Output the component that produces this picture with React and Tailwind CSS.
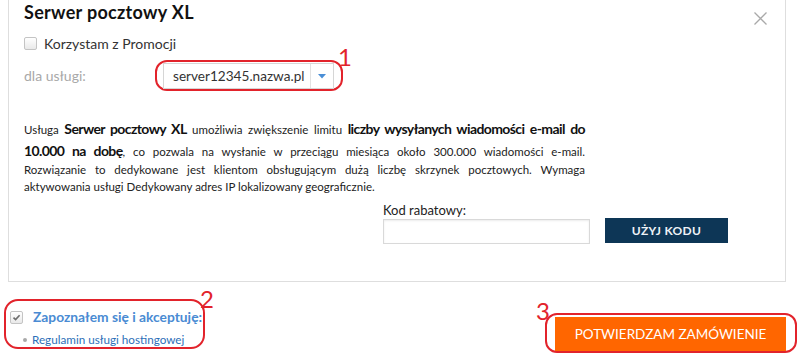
import React from "react";

function Check({ checked }) {
  return (
    <span className="inline-flex items-center justify-center w-[13px] h-[13px] rounded-[2px] border border-[#c4c4c4] bg-gradient-to-b from-[#ffffff] to-[#e9e9e9] shrink-0">
      {checked && (
        <svg width="9" height="9" viewBox="0 0 9 9">
          <path d="M1.5 4.6 L3.6 6.6 L7.6 2.2" fill="none" stroke="#6d6d6d" strokeWidth="1.6" />
        </svg>
      )}
    </span>
  );
}

const B = ({ children }) => (
  <b className="text-[14px] tracking-[-0.6px] text-[#111]">{children}</b>
);

export default function App() {
  return (
    <div className="w-[801px] h-[359px] bg-white overflow-hidden font-['Lato',sans-serif] text-[#222]">
      {/* card */}
      <div className="relative ml-[8px] w-[778px] h-[282px] border-x border-b border-[#dedede] pl-[15px]">
        <button className="absolute right-[18px] top-[12px] w-[13px] h-[13px]">
          <svg width="13" height="13" viewBox="0 0 13 13">
            <path d="M0.5 0.5 L12.5 12.5 M12.5 0.5 L0.5 12.5" stroke="#a9a9a9" strokeWidth="1.3" />
          </svg>
        </button>

        <h1 className="h-[24px] leading-[24px] text-[18px] tracking-[0.3px] font-bold text-[#111]">Serwer pocztowy XL</h1>

        <label className="mt-[9px] h-[20px] flex items-center gap-[7px] text-[14px] text-[#333]">
          <Check />
          <span>Korzystam z Promocji</span>
        </label>

        <div className="mt-[7px] flex items-center">
          <span className="w-[131px] text-[14px] text-[#a8a8a8]">dla usługi:</span>
          <div className="relative flex border-2 border-[#e2232b] rounded-[12px] pl-[6px] pr-[7px] pt-[1px]">
            <div className="flex h-[26px] w-[171px] border border-[#d6d6d6] bg-white">
              <span className="flex-1 pl-[9px] leading-[24px] text-[13.6px] text-[#333]">server12345.nazwa.pl</span>
              <span className="w-[23px] border-l border-[#e2e2e2] flex items-center justify-center">
                <svg width="8" height="5" viewBox="0 0 8 5">
                  <path d="M0 0 L8 0 L4 4.5 Z" fill="#4a8ed6" />
                </svg>
              </span>
            </div>
            <span className="absolute right-[-11px] top-[-17px] text-[24px] leading-none text-[#e2232b]">1</span>
          </div>
        </div>

        <div className="mt-[27px] w-[561px] text-[11.5px] text-[#222]">
          <p className="h-[22px] leading-[22px] text-justify [text-align-last:justify]">
            Usługa <B>Serwer pocztowy XL</B> umożliwia zwiększenie limitu <B>liczby wysyłanych wiadomości e-mail do</B>
          </p>
          <p className="h-[21px] leading-[21px] text-justify [text-align-last:justify]">
            <B>10.000 na dobę</B>, co pozwala na wysłanie w przeciągu miesiąca około 300.000 wiadomości e-mail.
          </p>
          <p className="h-[18px] leading-[18px] text-justify [text-align-last:justify]">
            Rozwiązanie to dedykowane jest klientom obsługującym dużą liczbę skrzynek pocztowych. Wymaga
          </p>
          <p className="h-[16px] leading-[16px]">
            aktywowania usługi Dedykowany adres IP lokalizowany geograficznie.
          </p>
        </div>

        <div className="mt-[7px] ml-[359px] flex items-end gap-[15px]">
          <div className="flex flex-col">
            <span className="h-[17px] leading-[17px] text-[13px] text-[#222]">Kod rabatowy:</span>
            <input className="w-[207px] h-[25px] border border-[#d9d9d9] shadow-[inset_0_1px_2px_rgba(0,0,0,0.08)] outline-none" />
          </div>
          <button className="mb-[1px] w-[123px] h-[25px] bg-[#0d3656] text-[#eef2f6] text-[12px] font-bold tracking-[0.3px]">
            UŻYJ KODU
          </button>
        </div>
      </div>

      {/* bottom */}
      <div className="flex justify-between">
        <div className="relative ml-[4px] mt-[17px] w-[201px] h-[50px] border-2 border-[#e2232b] rounded-[14px] pl-[4px] pt-[9px]">
          <div className="flex items-center gap-[10px] h-[14px]">
            <Check checked />
            <span className="text-[13.8px] font-bold text-[#4a8bd3]">Zapoznałem się i akceptuję:</span>
          </div>
          <div className="mt-[9px] flex items-center gap-[5px] pl-[13px] h-[14px]">
            <span className="w-[4px] h-[4px] rounded-full bg-[#a9a9a9]" />
            <span className="text-[11.7px] text-[#2d6fb8]">Regulamin usługi hostingowej</span>
          </div>
          <span className="absolute right-[-11px] top-[-14px] text-[24px] leading-none text-[#e2232b]">2</span>
        </div>

        <div className="relative mr-[4px] mt-[31px] w-[252px] h-[40px] border-2 border-[#e2232b] rounded-[12px] pl-[8px] pt-[2px]">
          <button className="w-[231px] h-[34px] bg-[#ff6600] text-white text-[13.5px]">
            POTWIERDZAM ZAMÓWIENIE
          </button>
          <span className="absolute left-[-11px] top-[-16px] text-[24px] leading-none text-[#e2232b]">3</span>
        </div>
      </div>
    </div>
  );
}
